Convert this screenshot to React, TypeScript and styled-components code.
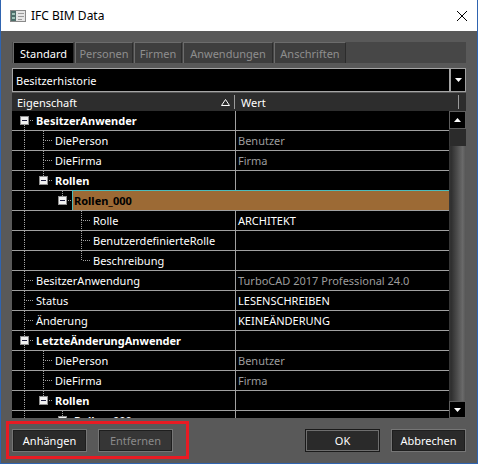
import React from 'react';
import styled, { createGlobalStyle } from 'styled-components';

const GlobalStyle = createGlobalStyle`
  html, body { margin: 0; padding: 0; background: #ffffff; }
  body { font-family: "Noto Sans", "Open Sans", sans-serif; font-size: 11px; }
  * { box-sizing: border-box; }
`;

const ORANGE = '#9c6a35';
const LINE = '#a0a0a0';

const Window = styled.div`
  position: relative;
  width: 478px;
  height: 464px;
  display: flex;
  flex-direction: column;
  background: #595959;
  border: 1px solid #2f64b0;
  border-top: none;
`;

const TitleBar = styled.div`
  height: 31px;
  flex: none;
  background: #ffffff;
  display: flex;
  align-items: center;
  padding-left: 9px;
  padding-right: 9px;
`;

const TitleText = styled.span`
  margin-left: 5px;
  font-size: 12px;
  color: #000;
  flex: 1;
`;

const Body = styled.div`
  flex: 1;
  display: flex;
  flex-direction: column;
  padding: 11px 11px 0 11px;
`;

const TabStrip = styled.div`
  height: 21px;
  display: flex;
  background: #474747;
  padding-left: 1px;
`;

const Tab = styled.div<{ $active?: boolean; $w: number }>`
  width: ${p => p.$w}px;
  margin-right: 1px;
  display: flex;
  align-items: center;
  justify-content: center;
  border-top: 1px solid #6c6c6c;
  border-left: 1px solid #6c6c6c;
  border-right: 1px solid #2c2c2c;
  background: ${p => (p.$active ? '#000000' : '#3e3e3e')};
  color: ${p => (p.$active ? '#ffffff' : '#8e8e8e')};
  white-space: nowrap;
`;

const Combo = styled.div`
  margin-top: 5px;
  height: 24px;
  display: flex;
`;

const ComboField = styled.div`
  flex: 1;
  border: 1px solid #a6a6a6;
  background: #000;
  color: #fff;
  padding-left: 3px;
  display: flex;
  align-items: center;
`;

const ComboButton = styled.div`
  width: 16px;
  border: 1px solid #a0a0a0;
  background: #000;
  display: flex;
  align-items: center;
  justify-content: center;
`;

const GridHeader = styled.div`
  margin-top: 1px;
  height: 18px;
  display: flex;
  background: #2d2d2d;
  color: #fff;
`;

const HeaderCell = styled.div<{ $w: number; $pl: number }>`
  width: ${p => p.$w}px;
  padding-left: ${p => p.$pl}px;
  padding-right: 4px;
  display: flex;
  align-items: center;
  justify-content: space-between;
`;

const HeaderDivider = styled.div`
  width: 1px;
  height: 14px;
  align-self: center;
  background: #9a9a9a;
`;

const GridBody = styled.div`
  height: 307px;
  display: flex;
`;

const Rows = styled.div`
  flex: 1;
  overflow: hidden;
  background: #000;
`;

const Row = styled.div`
  position: relative;
  height: 20px;
  display: flex;
  border-bottom: 1px solid ${LINE};
  line-height: 19px;
`;

const NameCell = styled.div<{ $selected?: boolean }>`
  width: 224px;
  flex: none;
  display: flex;
  padding-left: 3px;
  border-right: 1px solid ${p => (p.$selected ? ORANGE : LINE)};
`;

const Label = styled.div<{ $bold?: boolean; $selected?: boolean }>`
  flex: 1;
  padding-left: 2px;
  white-space: nowrap;
  font-weight: ${p => (p.$bold ? 700 : 400)};
  color: ${p => (p.$selected ? '#000' : '#fff')};
  background: ${p => (p.$selected ? ORANGE : 'transparent')};
`;

const Value = styled.div<{ $muted?: boolean; $selected?: boolean }>`
  flex: 1;
  padding-left: 2px;
  white-space: nowrap;
  color: ${p => (p.$muted ? '#9c9c9c' : '#fff')};
  background: ${p => (p.$selected ? ORANGE : 'transparent')};
`;

const FocusFrame = styled.div`
  position: absolute;
  left: 60px;
  top: -1px;
  right: 0;
  bottom: 0;
  border-top: 1px solid #4cbcbc;
  border-left: 1px solid #4cbcbc;
  pointer-events: none;
`;

const ScrollBar = styled.div`
  width: 17px;
  display: flex;
  flex-direction: column;
`;

const ScrollButton = styled.div<{ $h: number }>`
  height: ${p => p.$h}px;
  background: #000;
  border: 1px solid #5e5e5e;
  display: flex;
  align-items: center;
  justify-content: center;
`;

const ScrollDark = styled.div`
  height: 17px;
  background: #2b2b2b;
  border-left: 1px solid #3c3c3c;
`;

const ScrollThumb = styled.div`
  flex: 1;
  background: linear-gradient(to right, #3a3a3a 0%, #2e2e2e 12%, #4a4a4a 45%, #6a6a6a 80%, #555 100%);
`;

const ButtonBar = styled.div`
  margin-top: 11px;
  height: 23px;
  display: flex;
  gap: 11px;
`;

const Spacer = styled.div`
  flex: 1;
`;

const Button = styled.div<{ $disabled?: boolean; $default?: boolean }>`
  width: 75px;
  display: flex;
  align-items: center;
  justify-content: center;
  border: 1px solid ${p => (p.$default ? '#1a1a1a' : '#767676')};
  box-shadow: inset 0 0 0 1px ${p => (p.$default ? '#6e6e6e' : '#1e1e1e')};
  background: ${p => (p.$disabled ? '#363636' : '#2a2a2a')};
  color: ${p => (p.$disabled ? '#8a8a8a' : '#fff')};
`;

const Annotation = styled.div`
  position: absolute;
  left: 5px;
  top: 421px;
  width: 183px;
  height: 38px;
  border: 3px solid #e81b23;
  pointer-events: none;
`;

type Unit = { up?: boolean; down?: boolean; right?: boolean; box?: boolean };

const DOT = { stroke: '#a0a0a0', strokeWidth: 1, strokeDasharray: '1 1' };

const TreeUnit: React.FC<{ u: Unit }> = ({ u }) => (
  <svg width="19" height="19" style={{ flex: 'none', display: 'block' }}>
    {u.up && <line x1="9.5" y1={0} x2="9.5" y2={u.box ? 5 : 10} {...DOT} />}
    {u.down && <line x1="9.5" y1={u.box ? 14 : 9} x2="9.5" y2={19} {...DOT} />}
    {u.right && <line x1={u.box ? 15 : 11} y1="9.5" x2={19} y2="9.5" {...DOT} />}
    {u.box && (
      <g>
        <rect x="5.5" y="5.5" width="8" height="8" fill="#f0f0f0" stroke="#8f8f8f" />
        <line x1="7" y1="9.5" x2="12" y2="9.5" stroke="#1c1c3c" />
      </g>
    )}
  </svg>
);

const P: Unit = { up: true, down: true };
const N: Unit = {};
const T: Unit = { up: true, down: true, right: true };
const E: Unit = { up: true, right: true };

type RowData = {
  label: string;
  value?: string;
  muted?: boolean;
  bold?: boolean;
  selected?: boolean;
  units: Unit[];
};

const rows: RowData[] = [
  { label: 'BesitzerAnwender', bold: true, units: [{ box: true, down: true, right: true }] },
  { label: 'DiePerson', value: 'Benutzer', muted: true, units: [P, T] },
  { label: 'DieFirma', value: 'Firma', muted: true, units: [P, T] },
  { label: 'Rollen', bold: true, units: [P, { up: true, box: true, right: true }] },
  { label: 'Rollen_000', bold: true, selected: true, units: [P, N, { up: true, box: true, right: true }] },
  { label: 'Rolle', value: 'ARCHITEKT', units: [P, N, N, T] },
  { label: 'BenutzerdefinierteRolle', units: [P, N, N, T] },
  { label: 'Beschreibung', units: [P, N, N, E] },
  { label: 'BesitzerAnwendung', value: 'TurboCAD 2017 Professional 24.0', muted: true, units: [T] },
  { label: 'Status', value: 'LESENSCHREIBEN', units: [T] },
  { label: 'Änderung', value: 'KEINEÄNDERUNG', units: [T] },
  { label: 'LetzteÄnderungAnwender', bold: true, units: [{ up: true, down: true, box: true, right: true }] },
  { label: 'DiePerson', value: 'Benutzer', muted: true, units: [P, T] },
  { label: 'DieFirma', value: 'Firma', muted: true, units: [P, T] },
  { label: 'Rollen', bold: true, units: [P, { up: true, box: true, right: true }] },
  { label: 'Rollen_000', bold: true, units: [P, N, { up: true, box: true, right: true }] },
];

const tabs = [
  { name: 'Standard', w: 61, active: true },
  { name: 'Personen', w: 58 },
  { name: 'Firmen', w: 48 },
  { name: 'Anwendungen', w: 90 },
  { name: 'Anschriften', w: 72 },
];

const TriDown = () => (
  <svg width="7" height="4" style={{ display: 'block' }}>
    <polygon points="0,0 7,0 3.5,4" fill="#fff" />
  </svg>
);
const TriUp = () => (
  <svg width="7" height="4" style={{ display: 'block' }}>
    <polygon points="0,4 7,4 3.5,0" fill="#fff" />
  </svg>
);

const AppIcon = () => (
  <svg width="16" height="14" viewBox="0 0 16 14" style={{ display: 'block' }}>
    <rect x="0.5" y="1.5" width="15" height="11" fill="#e6e6e6" stroke="#8a8a8a" />
    <rect x="1" y="2" width="5" height="10" fill="#4e6e6a" />
    <rect x="2" y="4" width="3" height="2" fill="#9fc3b8" />
    <rect x="2" y="8" width="3" height="2" fill="#9fc3b8" />
    <rect x="8" y="4" width="6" height="1" fill="#9a9a9a" />
    <rect x="8" y="7" width="6" height="1" fill="#9a9a9a" />
    <rect x="8" y="10" width="4" height="1" fill="#9a9a9a" />
  </svg>
);

const CloseIcon = () => (
  <svg width="12" height="12" viewBox="0 0 12 12" style={{ display: 'block' }}>
    <path d="M1 1 L11 11 M11 1 L1 11" stroke="#000" strokeWidth="1" />
  </svg>
);

const SortIcon = () => (
  <svg width="9" height="7" viewBox="0 0 9 7" style={{ display: 'block' }}>
    <polygon points="0.5,6.5 8.5,6.5 4.5,0.5" fill="none" stroke="#fff" />
  </svg>
);

export default function App() {
  return (
    <>
      <GlobalStyle />
      <Window>
        <TitleBar>
          <AppIcon />
          <TitleText>IFC BIM Data</TitleText>
          <CloseIcon />
        </TitleBar>
        <Body>
          <TabStrip>
            {tabs.map(t => (
              <Tab key={t.name} $active={t.active} $w={t.w}>
                {t.name}
              </Tab>
            ))}
          </TabStrip>
          <Combo>
            <ComboField>Besitzerhistorie</ComboField>
            <ComboButton>
              <TriDown />
            </ComboButton>
          </Combo>
          <GridHeader>
            <HeaderCell $w={222} $pl={5}>
              <span>Eigenschaft</span>
              <SortIcon />
            </HeaderCell>
            <HeaderDivider />
            <HeaderCell $w={223} $pl={6}>
              <span>Wert</span>
            </HeaderCell>
            <HeaderDivider />
          </GridHeader>
          <GridBody>
            <Rows>
              {rows.map((r, i) => (
                <Row key={i}>
                  <NameCell $selected={r.selected}>
                    {r.units.map((u, j) => (
                      <TreeUnit key={j} u={u} />
                    ))}
                    <Label $bold={r.bold} $selected={r.selected}>
                      {r.label}
                    </Label>
                  </NameCell>
                  <Value $muted={r.muted} $selected={r.selected}>
                    {r.value}
                  </Value>
                  {r.selected && <FocusFrame />}
                </Row>
              ))}
            </Rows>
            <ScrollBar>
              <ScrollButton $h={18}>
                <TriUp />
              </ScrollButton>
              <ScrollDark />
              <ScrollThumb />
              <ScrollButton $h={17}>
                <TriDown />
              </ScrollButton>
            </ScrollBar>
          </GridBody>
          <ButtonBar>
            <Button>Anhängen</Button>
            <Button $disabled>Entfernen</Button>
            <Spacer />
            <Button $default>OK</Button>
            <Button>Abbrechen</Button>
          </ButtonBar>
        </Body>
        <Annotation />
      </Window>
    </>
  );
}
